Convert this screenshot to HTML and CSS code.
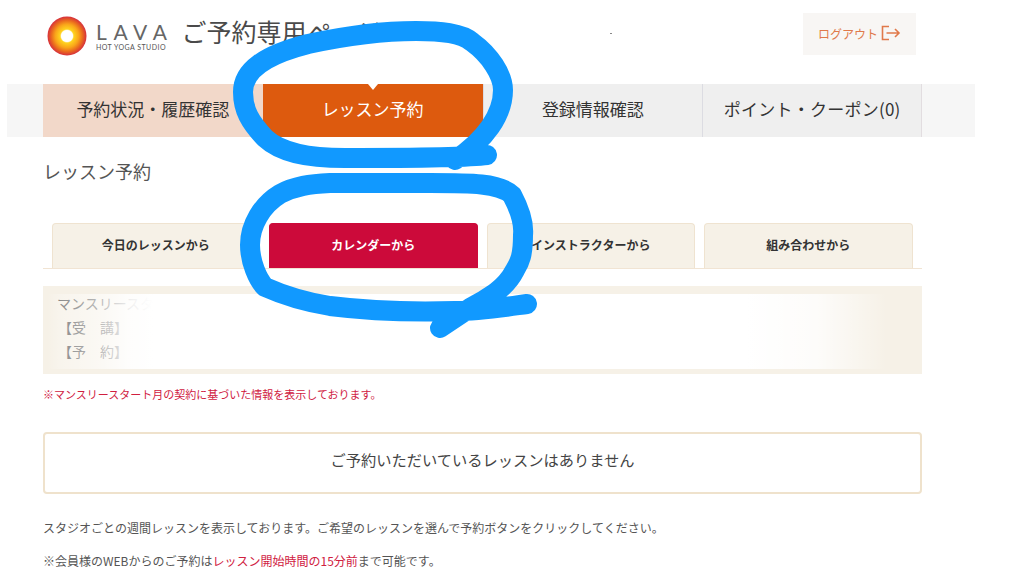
FILE: index.html
```html
<!DOCTYPE html>
<html lang="ja">
<head>
<meta charset="utf-8">
<title>ご予約専用ページ</title>
<link rel="stylesheet" href="styles.css">
</head>
<body>
<header class="header">
  <div class="logo">
    <svg class="logo-mark" width="40" height="40" viewBox="0 0 40 40" aria-hidden="true">
      <defs>
        <radialGradient id="sun">
          <stop offset="0.28" stop-color="#fff6d8"/>
          <stop offset="0.36" stop-color="#ffd21f"/>
          <stop offset="0.6" stop-color="#f9a51a"/>
          <stop offset="0.8" stop-color="#ea6a1e"/>
          <stop offset="1" stop-color="#d62f3c"/>
        </radialGradient>
      </defs>
      <circle cx="20" cy="20" r="19.5" fill="url(#sun)"/>
      <circle cx="20" cy="20" r="6" fill="#fff"/>
    </svg>
    <div class="logo-text">
      <div class="logo-name">LAVA</div>
      <div class="logo-sub">HOT YOGA STUDIO</div>
    </div>
  </div>
  <h1 class="title">ご予約専用ページ</h1>
  <a class="logout">ログアウト
    <svg width="20" height="16" viewBox="0 0 20 16" aria-hidden="true">
      <path class="logout-icon" d="M8 1.5H1.5v13H8M5.5 8H18M14 4l4 4-4 4"/>
    </svg>
  </a>
</header>
<span class="speck"></span>

<nav class="nav">
  <div class="nav-inner">
    <a class="nav-item nav-history">予約状況・履歴確認</a>
    <a class="nav-item nav-active">レッスン予約</a>
    <a class="nav-item">登録情報確認</a>
    <a class="nav-item nav-last">ポイント・クーポン(0)</a>
  </div>
</nav>

<main class="main">
  <h2 class="heading">レッスン予約</h2>
  <div class="tabs">
    <a class="tab">今日のレッスンから</a>
    <a class="tab tab-active">カレンダーから</a>
    <a class="tab">インストラクターから</a>
    <a class="tab">組み合わせから</a>
  </div>
  <section class="panel">
    <p class="panel-row">マンスリースタート</p>
    <p class="panel-row panel-indent">【受　講】</p>
    <p class="panel-row panel-indent">【予　約】</p>
    <div class="panel-mask"></div>
  </section>
  <p class="note">※マンスリースタート月の契約に基づいた情報を表示しております。</p>
  <div class="message">ご予約いただいているレッスンはありません</div>
  <p class="copy copy-first">スタジオごとの週間レッスンを表示しております。ご希望のレッスンを選んで予約ボタンをクリックしてください。</p>
  <p class="copy copy-second">※会員様のWEBからのご予約は<span class="em">レッスン開始時間の15分前</span>まで可能です。</p>
</main>

<svg class="scribble" width="1024" height="576" viewBox="0 0 1024 576" aria-hidden="true">
  <path d="M487 155 C465 158 400 158 345 158 C305 158 280 152 265 138 C250 122 243 110 243 92 C243 70 265 55 308 44 C345 36 385 31 416 31 C440 31 462 33 472 42 C490 55 503 75 503 90 C503 115 485 140 455 160"/>
  <path d="M527 304 C505 307 480 311 455 311 C420 312 370 311 330 306 C305 302 285 296 265 287 C258 280 250 262 250 245 C250 225 262 205 280 194 C295 186 310 184 330 183 L430 183 C470 183 500 183 512 195 C520 210 524 225 523 235 C523 255 520 262 515 270 C510 280 503 287 495 293 C485 300 478 304 470 308 L440 328"/>
</svg>
</body>
</html>
```
FILE: styles.css
```css
* { box-sizing: border-box; }
html, body { margin: 0; padding: 0; }
body {
  width: 1024px;
  height: 576px;
  overflow: hidden;
  position: relative;
  background: #fff;
  color: #444;
  font-family: "Noto Sans CJK JP", "Noto Sans", sans-serif;
}
p, h1, h2 { margin: 0; font-weight: 400; }

.header {
  height: 84px;
  padding: 13px 108px 0 47px;
  display: flex;
  align-items: flex-start;
}
.logo { display: flex; align-items: center; gap: 9px; height: 46px; }
.logo-mark { display: block; }
.logo-text { font-family: Lato, sans-serif; color: #555; }
.logo-name { font-size: 21px; line-height: 23px; letter-spacing: 6.6px; font-weight: 400; color: #666; }
.logo-sub { font-size: 7px; line-height: 9px; letter-spacing: 0.45px; white-space: nowrap; }
.title { margin: -3px 0 0 8px; font-size: 25px; line-height: 42px; color: #4a4a4a; }
.logout {
  margin-left: auto;
  width: 113px;
  height: 42px;
  padding-bottom: 2px;
  display: flex;
  align-items: center;
  justify-content: center;
  gap: 3px;
  background: #f8f6f4;
  color: #e0794a;
  font-size: 12px;
}
.logout-icon { fill: none; stroke: #e0794a; stroke-width: 1.6; }
.speck { position: absolute; left: 610px; top: 33px; width: 2px; height: 1px; background: #888; }

.nav { margin: 0 49px 0 7px; background: #f6f6f6; height: 53px; padding: 0 53px 0 36px; }
.nav-inner { display: grid; grid-template-columns: repeat(4, 1fr); height: 53px; }
.nav-item {
  display: flex;
  align-items: center;
  justify-content: center;
  padding-bottom: 4px;
  background: #efefef;
  font-size: 17px;
  color: #333;
  border-left: 1px solid #dcdce2;
  position: relative;
}
.nav-last { border-right: 1px solid #e2dde0; letter-spacing: 0.25px; }
.nav-history { background: #f2d8c9; border-left: 0; }
.nav-active { background: #dd5a0e; color: #fff; border-left: 0; }
.nav-active::before {
  content: "";
  position: absolute;
  top: 0;
  left: 50%;
  margin-left: -5px;
  border: 5px solid transparent;
  border-bottom-width: 0;
  border-top: 6px solid #fff;
}

.main { padding-left: 43px; width: 922px; }
.heading { margin-top: 21px; font-size: 18px; line-height: 26px; color: #555; }
.tabs {
  margin-top: 39px;
  padding-left: 8.5px;
  display: flex;
  gap: 9px;
  border-bottom: 1px solid #f1e4d3;
}
.tab {
  width: 208.5px;
  height: 45px;
  padding-bottom: 3px;
  display: flex;
  align-items: center;
  justify-content: center;
  background: #f6f1e7;
  border: 1px solid #efe3d0;
  border-bottom: 0;
  border-radius: 4px 4px 0 0;
  font-size: 12px;
  font-weight: 700;
  color: #333;
}
.tab-active { background: #cc0a3a; border-color: #cc0a3a; color: #fff; }

.panel {
  position: relative;
  margin-top: 17px;
  height: 88px;
  padding: 5px 14px 0;
  background: #f6f1e7;
  overflow: hidden;
}
.panel-row { font-size: 14px; line-height: 24px; color: #666; }
.panel-indent { margin-left: 1px; }
.panel-mask {
  position: absolute;
  left: 0;
  right: 0;
  top: 8px;
  bottom: 5px;
  background: linear-gradient(90deg, rgba(255,255,255,0) 0.5%, rgba(255,255,255,.25) 2%, rgba(255,255,255,.55) 6.5%, rgba(255,255,255,.9) 10%, #fff 12.5%, #fff 80%, rgba(255,255,255,.8) 88%, rgba(255,255,255,.4) 92%, rgba(255,255,255,0) 96%);
}
.note { margin-top: 12px; font-size: 11px; line-height: 16px; color: #d0203f; }
.message {
  margin-top: 30px;
  height: 62px;
  padding-bottom: 8px;
  display: flex;
  align-items: center;
  justify-content: center;
  border: 2px solid #efe2cc;
  border-radius: 4px;
  font-size: 15.25px;
  color: #444;
}
.copy { font-size: 12px; line-height: 16px; color: #555; white-space: nowrap; }
.copy-first { margin-top: 26px; }
.copy-second { margin-top: 17px; }
.em { color: #d0203f; }

.scribble { position: absolute; left: 0; top: 0; pointer-events: none; }
.scribble path { fill: none; stroke: #1199ff; stroke-width: 20; stroke-linecap: round; stroke-linejoin: round; }
```
